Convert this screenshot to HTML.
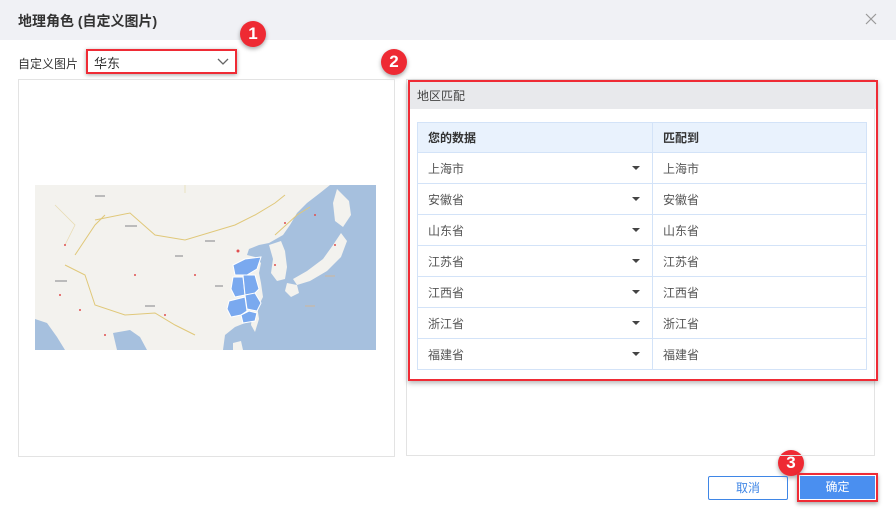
<!DOCTYPE html>
<html><head><meta charset="utf-8">
<style>
*{box-sizing:border-box;margin:0;padding:0}
body{width:896px;height:511px;background:#fff;font-family:"Liberation Sans","Noto Sans CJK SC",sans-serif;position:relative;overflow:hidden;color:#333}
.abs{position:absolute}
.hdr{left:0;top:0;width:896px;height:40px;background:#f0f1f5}
.title{left:18px;top:11px;font-size:14px;font-weight:bold;color:#333}
.lbl{left:18px;top:55px;font-size:12px;color:#333}
.sel{left:86px;top:49px;width:151px;height:25px;border:2px solid #ef2b35;box-shadow:0 1px 4px rgba(0,0,0,.35);font-size:13px;padding:2px 6px;color:#333}
.num{width:26px;height:26px;border-radius:50%;background:#ee2a33;color:#fff;font-size:17px;font-weight:bold;text-align:center;line-height:26px;box-shadow:0 2px 4px rgba(0,0,0,.35)}
.panel{border:1px solid #e3e3e3}
.rbox{left:408px;top:80px;width:470px;height:301px;border:2px solid #ef2b35;box-shadow:0 2px 5px rgba(0,0,0,.3)}
.band{left:410px;top:82px;width:466px;height:27px;background:#e8e9ec;font-size:12px;color:#444;padding:5px 7px}
table{position:absolute;left:417px;top:122px;width:450px;border-collapse:collapse;font-size:12px;color:#555}
td{border:1px solid #d3e3f8;height:31px;padding:0 10px;position:relative}
tr.h td{background:#e9f2fd;color:#333;font-weight:bold;height:30px}
.tri{position:absolute;right:12px;top:13px;width:0;height:0;border-left:4px solid transparent;border-right:4px solid transparent;border-top:4px solid #444}
.btn{font-size:12px;text-align:center}
</style></head><body>
<div class="abs hdr"></div>
<div class="abs title">地理角色 (自定义图片)</div>
<svg class="abs" style="left:865px;top:13px" width="12" height="12"><path d="M1 1L11 11M11 1L1 11" stroke="#999" stroke-width="1.2"/></svg>
<div class="abs lbl">自定义图片</div>
<div class="abs sel">华东<svg class="abs" style="right:6px;top:7px" width="12" height="8"><path d="M1 1L6 6L11 1" fill="none" stroke="#666" stroke-width="1.3"/></svg></div>
<div class="abs num" style="left:240px;top:21px">1</div>
<div class="abs num" style="left:381px;top:49px">2</div>
<div class="abs num" style="left:778px;top:450px">3</div>

<div class="abs panel" style="left:18px;top:79px;width:377px;height:378px"></div>
<div class="abs panel" style="left:406px;top:79px;width:469px;height:377px"></div>

<svg class="abs" style="left:35px;top:185px" width="341" height="165" viewBox="0 0 341 165">
<rect width="341" height="165" fill="#f3f2ee"/>
<path d="M295 0L341 0L341 165L188 165L190 150L200 142L210 138L220 128L228 112L226 98L224 88L226 78L220 72L212 70L214 64L224 60L234 58L248 50L255 40L262 28L272 18L285 8Z" fill="#a6c0de"/>
<path d="M234 60L246 56L250 66L252 82L250 94L242 96L236 88L238 74Z" fill="#f3f2ee"/>
<path d="M302 4L314 16L316 30L308 42L300 36L298 18Z" fill="#f3f2ee"/>
<path d="M306 48L312 56L306 72L292 86L275 96L262 100L258 94L272 86L288 74L298 60Z" fill="#f3f2ee"/>
<path d="M252 98L262 100L264 108L256 112L250 106Z" fill="#f3f2ee"/>
<path d="M218 122L222 121L224 134L220 147L216 140Z" fill="#f3f2ee"/>
<path d="M198 158L206 156L208 165L198 165Z" fill="#f3f2ee"/>
<path d="M0 134L12 138L22 152L30 165L0 165Z" fill="#a6c0de"/>
<path d="M78 148L95 145L105 152L112 165L82 165Z" fill="#a6c0de"/>
<path d="M60 35L95 28L120 50L150 55L200 40L220 30L240 18L250 10" fill="none" stroke="#e0c87a" stroke-width="1"/>
<path d="M30 80L50 90L60 120L90 130L120 128L140 140L160 150M40 70L60 40L70 30M240 50L262 30L275 22" fill="none" stroke="#e0c87a" stroke-width="1"/>
<path d="M150 0L150 8M20 20L40 40L30 60" fill="none" stroke="#e8dcb4" stroke-width="0.8"/>
<g fill="#7aa9ef" stroke="#fff" stroke-width="1">
<path d="M198 80L210 74L226 72L222 84L212 90L200 90Z"/>
<path d="M198 92L208 92L210 110L200 112L196 104Z"/>
<path d="M208 90L220 90L224 104L218 110L210 110Z"/>
<path d="M210 110L220 108L226 118L222 126L212 124Z"/>
<path d="M194 116L210 112L212 126L206 130L196 132L192 124Z"/>
<path d="M206 130L214 126L222 128L220 136L208 138Z"/>
</g>
<g fill="#e05050"><circle cx="203" cy="66" r="1.5"/><circle cx="250" cy="38" r="1"/><circle cx="30" cy="60" r="1"/><circle cx="100" cy="90" r="1"/><circle cx="160" cy="90" r="1"/><circle cx="70" cy="150" r="1"/><circle cx="280" cy="30" r="1"/><circle cx="130" cy="130" r="1"/><circle cx="25" cy="110" r="1"/><circle cx="45" cy="125" r="1"/><circle cx="240" cy="80" r="1"/><circle cx="300" cy="60" r="1"/></g>
<g fill="#bbb"><rect x="60" y="10" width="10" height="2"/><rect x="90" y="40" width="12" height="2"/><rect x="170" y="55" width="10" height="2"/><rect x="140" y="70" width="8" height="2"/><rect x="20" y="95" width="12" height="2"/><rect x="110" y="120" width="10" height="2"/><rect x="270" y="120" width="10" height="2"/><rect x="180" y="100" width="8" height="2"/><rect x="290" y="90" width="10" height="2"/></g>
</svg>

<div class="abs rbox"></div>
<div class="abs band">地区匹配</div>
<table>
<tr class="h"><td style="width:235px">您的数据</td><td>匹配到</td></tr>
<tr><td>上海市<span class="tri"></span></td><td>上海市</td></tr>
<tr><td>安徽省<span class="tri"></span></td><td>安徽省</td></tr>
<tr><td>山东省<span class="tri"></span></td><td>山东省</td></tr>
<tr><td>江苏省<span class="tri"></span></td><td>江苏省</td></tr>
<tr><td>江西省<span class="tri"></span></td><td>江西省</td></tr>
<tr><td>浙江省<span class="tri"></span></td><td>浙江省</td></tr>
<tr><td>福建省<span class="tri"></span></td><td>福建省</td></tr>
</table>

<div class="abs btn" style="left:708px;top:476px;width:80px;height:24px;border:1px solid #3f86e6;border-radius:2px;color:#3f86e6;line-height:22px">取消</div>
<div class="abs" style="left:797px;top:473px;width:81px;height:29px;border:2px solid #ef2b35;box-shadow:0 2px 4px rgba(0,0,0,.35)"></div>
<div class="abs btn" style="left:800px;top:476px;width:75px;height:23px;background:#4a8ff0;color:#fff;line-height:23px">确定</div>
</body></html>
